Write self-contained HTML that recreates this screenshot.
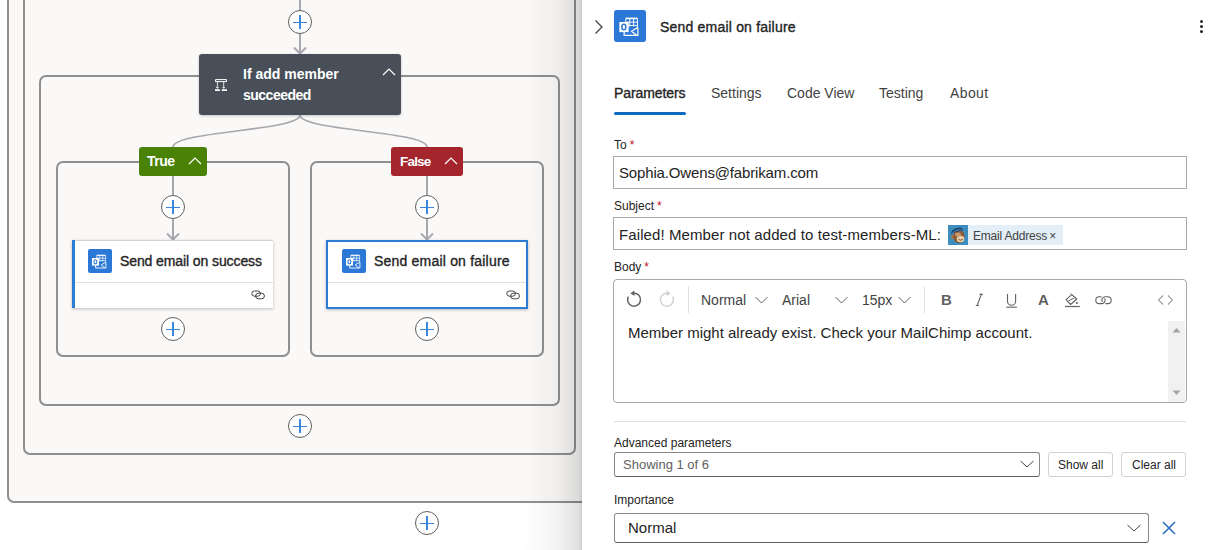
<!DOCTYPE html>
<html><head><meta charset="utf-8">
<style>
*{box-sizing:border-box;margin:0;padding:0}
html,body{width:1220px;height:550px;overflow:hidden;background:#fff;font-family:"Liberation Sans",sans-serif;color:#242424}
.abs{position:absolute}
.cont{position:absolute;border:2px solid #8f8f8f;border-radius:7px;background:#faf9f8}
.plus{position:absolute;width:24px;height:24px;border:1px solid #605e5c;border-radius:50%;background:#fff}
.plus:before,.plus:after{content:"";position:absolute;background:#3b86dc}
.plus:before{left:4px;top:10.6px;width:14.2px;height:1.5px}
.plus:after{left:9.9px;top:4px;width:1.8px;height:14.4px}
.lbl{position:absolute;height:29px;border-radius:3px;color:#fff;font-weight:bold;font-size:14px;line-height:29px}
.card{position:absolute;background:#fff;box-shadow:0 1px 3px rgba(0,0,0,.25)}
.ttl{position:absolute;-webkit-text-stroke:0.35px #242424;font-size:14px;color:#242424;white-space:nowrap}
#panel{position:absolute;left:582px;top:0;width:638px;height:550px;background:#fff}
.tab{position:absolute;top:85px;font-size:14px;color:#424242;white-space:nowrap}
.flabel{position:absolute;font-size:12px;color:#242424;white-space:nowrap}
.req{color:#c50f1f;margin-left:3px}
.inp{position:absolute;border:1px solid #a8a8a8;background:#fff}
.itxt{position:absolute;font-size:15px;color:#242424;white-space:nowrap}
</style></head><body>

<!-- canvas containers -->
<div class="cont" style="left:7px;top:-20px;width:640px;height:523px"></div>
<div class="cont" style="left:23px;top:-20px;width:553px;height:475px"></div>
<div class="cont" style="left:39px;top:75px;width:521px;height:331px"></div>
<div class="cont" style="left:55.5px;top:161px;width:234px;height:196px"></div>
<div class="cont" style="left:310px;top:161px;width:234px;height:196px"></div>

<!-- edges -->
<svg class="abs" style="left:0;top:0" width="582" height="550">
 <g stroke="#a8a7ad" stroke-width="2" fill="none">
  <path d="M300 0V10"/>
  <path d="M300 34V53"/><path d="M294 47.5L300 53.5L306 47.5"/>
  <path d="M300 115C300 131 173 131 173 147" stroke-width="1.7"/>
  <path d="M300 115C300 131 427 131 427 147" stroke-width="1.7"/>
  <path d="M173 176V195"/><path d="M173 219V239"/><path d="M167 233.5L173 239.5L179 233.5"/>
  <path d="M427 176V195"/><path d="M427 219V239"/><path d="M421 233.5L427 239.5L433 233.5"/>
 </g>
</svg>

<div class="plus" style="left:288px;top:10px"></div>
<div class="plus" style="left:161px;top:195px"></div>
<div class="plus" style="left:415px;top:195px"></div>
<div class="plus" style="left:161px;top:317px"></div>
<div class="plus" style="left:415px;top:317px"></div>
<div class="plus" style="left:288px;top:414px"></div>
<div class="plus" style="left:415px;top:511px"></div>

<!-- if node -->
<div class="abs" style="left:199px;top:54px;width:202px;height:61px;background:#484f59;border-radius:3px;box-shadow:0 1px 3px rgba(0,0,0,.2)">
 <svg class="abs" style="left:15px;top:25px" width="14" height="13" viewBox="0 0 14 13">
  <g fill="none" stroke="#fff" stroke-width="1"><path d="M1.5 0.6H12.5V2.6H1.5Z"/><path d="M3.4 3V9.3M9.7 3V9.3" stroke-width="0.8"/><path d="M2.2 8L3.4 9.3L4.6 8M8.5 8L9.7 9.3L10.9 8" stroke-width="0.8"/></g>
  <path d="M1 10.2H5.8V12H1ZM7.8 10.2H13V12H7.8Z" fill="#fff"/>
 </svg>
 <div class="abs" style="left:44px;top:10px;font-size:14px;line-height:21px;font-weight:bold;color:#fff">If add member<br><span style="letter-spacing:-0.5px">succeeded</span></div>
 <svg class="abs" style="left:183px;top:14px" width="14" height="8" viewBox="0 0 14 8"><path d="M1 7L7 1L13 7" fill="none" stroke="#fff" stroke-width="1.2"/></svg>
</div>

<!-- True / False labels -->
<div class="lbl" style="left:139px;top:147px;width:68px;background:#498205">
 <span class="abs" style="left:8px;top:0;letter-spacing:-0.55px">True</span>
 <svg class="abs" style="left:49px;top:10px" width="14" height="8" viewBox="0 0 14 8"><path d="M1 7L7 1L13 7" fill="none" stroke="#fff" stroke-width="1.2"/></svg>
</div>
<div class="lbl" style="left:391px;top:147px;width:72px;background:#a4262c">
 <span class="abs" style="left:9px;top:0;font-size:13.5px;letter-spacing:-0.8px">False</span>
 <svg class="abs" style="left:53px;top:10px" width="14" height="8" viewBox="0 0 14 8"><path d="M1 7L7 1L13 7" fill="none" stroke="#fff" stroke-width="1.2"/></svg>
</div>

<!-- cards -->
<div class="card" style="left:72px;top:240px;width:201px;height:68px;border-left:3.5px solid #2b7cd3">
 <div class="abs" style="left:0;top:0;width:198px;height:1px;background:#d2d2d2"></div>
 <svg class="abs" style="left:13px;top:9px" width="24" height="24" viewBox="0 0 24 24"><rect width="24" height="24" rx="2" fill="#2b78d6"/><g fill="none" stroke="#fff"><path d="M8.7 6.3H17.6" stroke-width="1.2"/><path d="M8.8 6.5V12.5M11.8 6.5V12.5M14.7 6.5V12.5M17.6 6.5V13M8.8 9.1H17.6M8.8 11.6H17.6" stroke-width="0.7"/><path d="M7.6 14V19H17.9V13.2M17.6 13.2L13.2 15.9L16.9 18.9" stroke-width="0.9"/></g><rect x="4" y="9" width="7" height="7.6" fill="#fff"/><ellipse cx="7.4" cy="12.8" rx="1.5" ry="2.1" fill="none" stroke="#2b78d6" stroke-width="1.1"/></svg>
 <div class="ttl" style="left:45px;top:13px;letter-spacing:-0.1px">Send email on success</div>
 <div class="abs" style="left:0;top:42px;width:198px;height:1px;background:#e0e0e0"></div><svg class="abs" style="left:176px;top:50px" width="15" height="11" viewBox="0 0 15 11"><g fill="none" stroke="#424242" stroke-width="1"><rect x="0.8" y="1" width="8.6" height="5.2" rx="2.6"/><rect x="4.6" y="3.2" width="8.8" height="5.6" rx="2.8"/></g></svg>
</div>
<div class="card" style="left:326px;top:240px;width:202px;height:69px;border:2px solid #2b7cd3">
 <svg class="abs" style="left:14px;top:7px" width="24" height="24" viewBox="0 0 24 24"><rect width="24" height="24" rx="2" fill="#2b78d6"/><g fill="none" stroke="#fff"><path d="M8.7 6.3H17.6" stroke-width="1.2"/><path d="M8.8 6.5V12.5M11.8 6.5V12.5M14.7 6.5V12.5M17.6 6.5V13M8.8 9.1H17.6M8.8 11.6H17.6" stroke-width="0.7"/><path d="M7.6 14V19H17.9V13.2M17.6 13.2L13.2 15.9L16.9 18.9" stroke-width="0.9"/></g><rect x="4" y="9" width="7" height="7.6" fill="#fff"/><ellipse cx="7.4" cy="12.8" rx="1.5" ry="2.1" fill="none" stroke="#2b78d6" stroke-width="1.1"/></svg>
 <div class="ttl" style="left:46px;top:11px;letter-spacing:0.2px">Send email on failure</div>
 <div class="abs" style="left:0;top:40px;width:198px;height:1px;background:#e0e0e0"></div><svg class="abs" style="left:178px;top:48px" width="15" height="11" viewBox="0 0 15 11"><g fill="none" stroke="#424242" stroke-width="1"><rect x="0.8" y="1" width="8.6" height="5.2" rx="2.6"/><rect x="4.6" y="3.2" width="8.8" height="5.6" rx="2.8"/></g></svg>
</div>

<!-- panel shadow -->
<div class="abs" style="left:522px;top:0;width:60px;height:550px;background:linear-gradient(to right,rgba(0,0,0,0),rgba(0,0,0,.04) 55%,rgba(0,0,0,.12) 94%,rgba(0,0,0,.19))"></div>

<div id="panel">
 <svg class="abs" style="left:12px;top:19px" width="10" height="16" viewBox="0 0 10 16"><path d="M1.5 1.5L8 8L1.5 14.5" fill="none" stroke="#424242" stroke-width="1.3"/></svg>
 <svg class="abs" style="left:32px;top:10px" width="32" height="32" viewBox="0 0 24 24"><rect width="24" height="24" rx="2" fill="#2b78d6"/><g fill="none" stroke="#fff"><path d="M8.7 6.3H17.6" stroke-width="1.2"/><path d="M8.8 6.5V12.5M11.8 6.5V12.5M14.7 6.5V12.5M17.6 6.5V13M8.8 9.1H17.6M8.8 11.6H17.6" stroke-width="0.7"/><path d="M7.6 14V19H17.9V13.2M17.6 13.2L13.2 15.9L16.9 18.9" stroke-width="0.9"/></g><rect x="4" y="9" width="7" height="7.6" fill="#fff"/><ellipse cx="7.4" cy="12.8" rx="1.5" ry="2.1" fill="none" stroke="#2b78d6" stroke-width="1.1"/></svg>
 <div class="abs" style="left:78px;top:19px;font-size:14px;-webkit-text-stroke:0.35px #242424;color:#242424;letter-spacing:0.2px;white-space:nowrap">Send email on failure</div>
 <div class="abs" style="left:618px;top:20px;width:3px;height:3px;border-radius:50%;background:#242424"></div>
 <div class="abs" style="left:618px;top:25px;width:3px;height:3px;border-radius:50%;background:#242424"></div>
 <div class="abs" style="left:618px;top:30px;width:3px;height:3px;border-radius:50%;background:#242424"></div>

 <div class="tab" style="left:32px;-webkit-text-stroke:0.35px #242424;color:#242424;letter-spacing:-0.1px">Parameters</div>
 <div class="abs" style="left:32px;top:112px;width:72px;height:3px;border-radius:2px;background:#0f6cbd"></div>
 <div class="tab" style="left:129px">Settings</div>
 <div class="tab" style="left:205px">Code View</div>
 <div class="tab" style="left:297px">Testing</div>
 <div class="tab" style="left:368px;letter-spacing:0.4px">About</div>

 <div class="flabel" style="left:32px;top:138px">To<span class="req">*</span></div>
 <div class="inp" style="left:31px;top:156px;width:574px;height:33px"></div>
 <div class="itxt" style="left:37px;top:164px;letter-spacing:-0.15px">Sophia.Owens@fabrikam.com</div>

 <div class="flabel" style="left:32px;top:199px">Subject<span class="req">*</span></div>
 <div class="inp" style="left:31px;top:217px;width:574px;height:33px"></div>
 <div class="itxt" style="left:37px;top:226px;letter-spacing:0.1px">Failed! Member not added to test-members-ML:</div>
 <div class="abs" style="left:366px;top:225px;width:115px;height:20px;background:#e3eef6"></div>
 <svg class="abs" style="left:366px;top:225px" width="20" height="20" viewBox="0 0 20 20"><rect width="20" height="20" fill="#3b8dbd"/><circle cx="5.2" cy="12" r="2.2" fill="#a8744a"/><ellipse cx="11" cy="11.5" rx="5.6" ry="6.6" fill="#8b5a35"/><ellipse cx="12.5" cy="14" rx="3.8" ry="3.2" fill="#e8cfa8"/><ellipse cx="10" cy="9.5" rx="3" ry="2" fill="#c89a6a"/><path d="M3 9C3.5 4 9 2 14 3L15 6C11 5.5 6 7 3 9Z" fill="#1d3f66"/><path d="M4 8.5C6 5.5 10 4.5 14 5" stroke="#4f8fd0" stroke-width="1" fill="none"/><path d="M10.5 14.5Q12.5 16 15 14.3" stroke="#5a3a20" stroke-width="0.8" fill="none"/></svg>
 <div class="abs" style="left:391px;top:229px;font-size:12px;color:#424242;white-space:nowrap;letter-spacing:-0.2px">Email Address <span style="font-size:12px;margin-left:-1px">&#215;</span></div>

 <div class="flabel" style="left:32px;top:260px">Body<span class="req">*</span></div>
 <div class="abs" style="left:31px;top:279px;width:574px;height:124px;border:1px solid #a8a8a8;border-radius:4px"></div>

 <!-- toolbar -->
 <svg class="abs" style="left:44px;top:290px" width="16" height="18" viewBox="0 0 16 18"><path d="M2.3 6.6A6.5 6.5 0 1 0 7.8 3.2" fill="none" stroke="#616161" stroke-width="1.5"/><path d="M4.3 3.3L8.4 0.6V6Z" fill="#616161"/></svg>
 <svg class="abs" style="left:77px;top:290px;transform:scaleX(-1)" width="16" height="18" viewBox="0 0 16 18"><path d="M2.3 6.6A6.5 6.5 0 1 0 7.8 3.2" fill="none" stroke="#cfcfcf" stroke-width="1.4"/><path d="M4.3 3.3L8.4 0.6V6Z" fill="#cfcfcf"/></svg>
 <div class="abs" style="left:106px;top:286px;width:1px;height:27px;background:#e0e0e0"></div>
 <div class="abs" style="left:119px;top:292px;font-size:14px;color:#424242">Normal</div>
 <svg class="abs" style="left:173px;top:296px" width="13" height="8" viewBox="0 0 13 8"><path d="M0.5 1L6.5 7L12.5 1" fill="none" stroke="#616161" stroke-width="1"/></svg>
 <div class="abs" style="left:200px;top:292px;font-size:14px;color:#424242">Arial</div>
 <svg class="abs" style="left:253px;top:296px" width="13" height="8" viewBox="0 0 13 8"><path d="M0.5 1L6.5 7L12.5 1" fill="none" stroke="#616161" stroke-width="1"/></svg>
 <div class="abs" style="left:280px;top:292px;font-size:14px;color:#424242">15px</div>
 <svg class="abs" style="left:316px;top:296px" width="13" height="8" viewBox="0 0 13 8"><path d="M0.5 1L6.5 7L12.5 1" fill="none" stroke="#616161" stroke-width="1"/></svg>
 <div class="abs" style="left:342px;top:286px;width:1px;height:27px;background:#e0e0e0"></div>
 <div class="abs" style="left:359px;top:291px;font-size:15px;font-weight:bold;color:#616161">B</div>
 <svg class="abs" style="left:393px;top:293px" width="10" height="14" viewBox="0 0 10 14"><path d="M6.3 1.4L2.2 12.5M4.6 1.4H7.8M0.8 12.5H4" fill="none" stroke="#616161" stroke-width="1.1"/></svg>
 <svg class="abs" style="left:424px;top:293px" width="12" height="15" viewBox="0 0 12 15"><path d="M1.5 1V8.2A4.05 4.05 0 0 0 9.6 8.2V1" fill="none" stroke="#616161" stroke-width="1.1"/><path d="M0.3 14.2H10.9" stroke="#616161" stroke-width="1.1"/></svg>
 <div class="abs" style="left:456px;top:291px;font-size:15px;font-weight:bold;color:#616161">A</div>
 <svg class="abs" style="left:482px;top:292px" width="16" height="16" viewBox="0 0 16 16"><path d="M2.1 7.7L7.7 2.6L12.8 7L6.6 12.5Z" fill="none" stroke="#616161" stroke-width="1.1" stroke-linejoin="round"/><path d="M6.6 1.5L8.6 3.3M4.7 8.9L10.3 5.9" stroke="#616161" stroke-width="1"/><circle cx="12.8" cy="11" r="1" fill="#616161"/><path d="M1 14.5H15.8" stroke="#616161" stroke-width="1.2"/></svg>
 <svg class="abs" style="left:513px;top:296px" width="17" height="9" viewBox="0 0 17 9"><path d="M6.5 0.8H4.2A3.4 3.4 0 0 0 4.2 7.6H7.2A3.4 3.4 0 0 0 9.6 2.4M10.5 7.6H12.8A3.4 3.4 0 0 0 12.8 0.8H9.8A3.4 3.4 0 0 0 7.4 6" fill="none" stroke="#616161" stroke-width="1.1"/></svg>
 <svg class="abs" style="left:575px;top:294px" width="17" height="12" viewBox="0 0 17 12"><path d="M6 1.5L1.5 6L6 10.5M11 1.5L15.5 6L11 10.5" fill="none" stroke="#9e9e9e" stroke-width="1.1"/></svg>
 <div class="abs" style="left:46px;top:324px;font-size:15px;color:#242424;white-space:nowrap">Member might already exist. Check your MailChimp account.</div>
 <div class="abs" style="left:586px;top:321px;width:17px;height:81px;background:#f1f1f1"></div>
 <svg class="abs" style="left:590px;top:327px" width="9" height="6" viewBox="0 0 9 6"><path d="M0.5 5.5L4.5 1L8.5 5.5Z" fill="#a3a3a3"/></svg>
 <svg class="abs" style="left:590px;top:390px" width="9" height="6" viewBox="0 0 9 6"><path d="M0.5 0.5L4.5 5L8.5 0.5Z" fill="#a3a3a3"/></svg>

 <div class="abs" style="left:32px;top:421px;width:572px;height:1px;background:#e0e0e0"></div>
 <div class="flabel" style="left:32px;top:436px">Advanced parameters</div>
 <div class="abs" style="left:32px;top:452px;width:426px;height:25px;border:1px solid #8a8886;border-bottom-color:#616161;border-radius:3px"></div>
 <div class="abs" style="left:41px;top:457px;font-size:13px;color:#616161;white-space:nowrap">Showing 1 of 6</div>
 <svg class="abs" style="left:438px;top:460px" width="14" height="8" viewBox="0 0 14 8"><path d="M0.5 1L7 7L13.5 1" fill="none" stroke="#424242" stroke-width="1"/></svg>
 <div class="abs" style="left:466px;top:452px;width:65px;height:25px;border:1px solid #d1d1d1;border-radius:3px"></div>
 <div class="abs" style="left:476px;top:458px;font-size:12px;color:#242424;white-space:nowrap">Show all</div>
 <div class="abs" style="left:539px;top:452px;width:65px;height:25px;border:1px solid #d1d1d1;border-radius:3px"></div>
 <div class="abs" style="left:550px;top:458px;font-size:12px;color:#242424;white-space:nowrap">Clear all</div>

 <div class="flabel" style="left:32px;top:493px">Importance</div>
 <div class="abs" style="left:32px;top:513px;width:535px;height:30px;border:1px solid #8a8886;border-bottom-color:#616161;border-radius:3px"></div>
 <div class="abs" style="left:46px;top:519px;font-size:15px;color:#242424;white-space:nowrap">Normal</div>
 <svg class="abs" style="left:545px;top:524px" width="14" height="8" viewBox="0 0 14 8"><path d="M0.5 1L7 7L13.5 1" fill="none" stroke="#424242" stroke-width="1"/></svg>
 <svg class="abs" style="left:580px;top:521px" width="14" height="14" viewBox="0 0 14 14"><path d="M1 1L13 13M13 1L1 13" fill="none" stroke="#2b6fc4" stroke-width="1.6"/></svg>
</div>

</body></html>
